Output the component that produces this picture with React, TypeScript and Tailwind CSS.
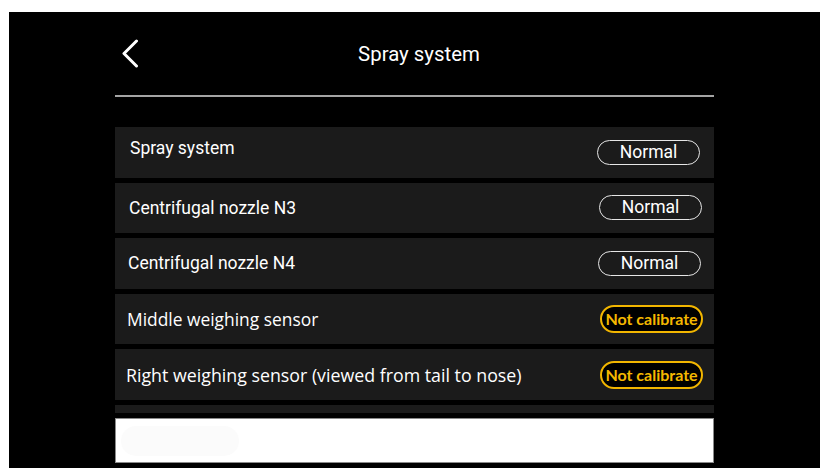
import React from "react";

type Row = {
  label: string;
  status: "normal" | "warn";
  font: string;
  pl: string;
  pr: string;
  textShift: string;
};

const rows: Row[] = [
  { label: "Spray system", status: "normal", font: "text-[17.5px] [font-family:Roboto,sans-serif]", pl: "pl-[15px]", pr: "pr-[14px]", textShift: "-mt-[8px]" },
  { label: "Centrifugal nozzle N3", status: "normal", font: "text-[17.5px] [font-family:Roboto,sans-serif]", pl: "pl-[14px]", pr: "pr-[12px]", textShift: "mt-0" },
  { label: "Centrifugal nozzle N4", status: "normal", font: "text-[17.5px] [font-family:Roboto,sans-serif]", pl: "pl-[13px]", pr: "pr-[13px]", textShift: "mt-0" },
  { label: "Middle weighing sensor", status: "warn", font: "text-[17.4px] [font-family:'Open_Sans',sans-serif]", pl: "pl-[12px]", pr: "pr-[11px]", textShift: "mt-0" },
  { label: "Right weighing sensor (viewed from tail to nose)", status: "warn", font: "text-[17.8px] [font-family:'Open_Sans',sans-serif]", pl: "pl-[11px]", pr: "pr-[11px]", textShift: "mt-[1px]" },
  { label: "", status: "normal", font: "", pl: "pl-[11px]", pr: "pr-[11px]", textShift: "mt-0" },
];

function Badge({ status }: { status: Row["status"] }) {
  if (status === "normal") {
    return (
      <div className="flex h-[25px] w-[103px] items-center justify-center rounded-full border-[1.5px] border-[#e6e6e6] text-[17.5px] leading-none text-white [font-family:Roboto,sans-serif]">
        Normal
      </div>
    );
  }
  return (
    <div className="flex h-[28px] w-[103px] items-center justify-center rounded-full border-[2px] border-[#f2b600] bg-black text-[16px] font-bold leading-none text-[#f4b800] [font-family:Lato,sans-serif]">
      Not calibrate
    </div>
  );
}

export default function App() {
  return (
    <div className="h-[475px] w-[831px] overflow-hidden bg-white pl-[9px] pt-[12px]">
      <div className="flex h-[456px] w-[811px] flex-col bg-black pl-[106px]">
        <div className="flex w-[599px] flex-col">
          <div className="relative flex h-[83px] items-center justify-center">
            <svg
              className="absolute left-[6px] top-[27px]"
              width="18"
              height="30"
              viewBox="0 0 18 30"
              fill="none"
            >
              <polyline
                points="15.5,2 3,14.5 15.5,27"
                stroke="white"
                strokeWidth="3"
                strokeLinecap="round"
                strokeLinejoin="round"
              />
            </svg>
            <div className="ml-[9px] mt-[2px] text-[20.4px] text-white [font-family:Roboto,sans-serif]">
              Spray system
            </div>
          </div>
          <div className="h-[2px] w-full bg-[#a4a4a4]" />
          <div className="mt-[30px] flex h-[286px] flex-col gap-[5px] overflow-hidden">
            {rows.map((r, i) => (
              <div
                key={i}
                className={`flex h-[50.6px] shrink-0 items-center justify-between bg-[#1b1b1b] ${r.pl} ${r.pr}`}
              >
                <span className={`${r.textShift} text-white ${r.font}`}>{r.label}</span>
                {r.label && <Badge status={r.status} />}
              </div>
            ))}
          </div>
          <div className="mt-[5px] flex h-[45px] items-center border border-[#8a8a8a] bg-white pl-[5px]">
            <div className="h-[30px] w-[118px] rounded-full bg-[#fbfbfb]" />
          </div>
        </div>
      </div>
    </div>
  );
}
